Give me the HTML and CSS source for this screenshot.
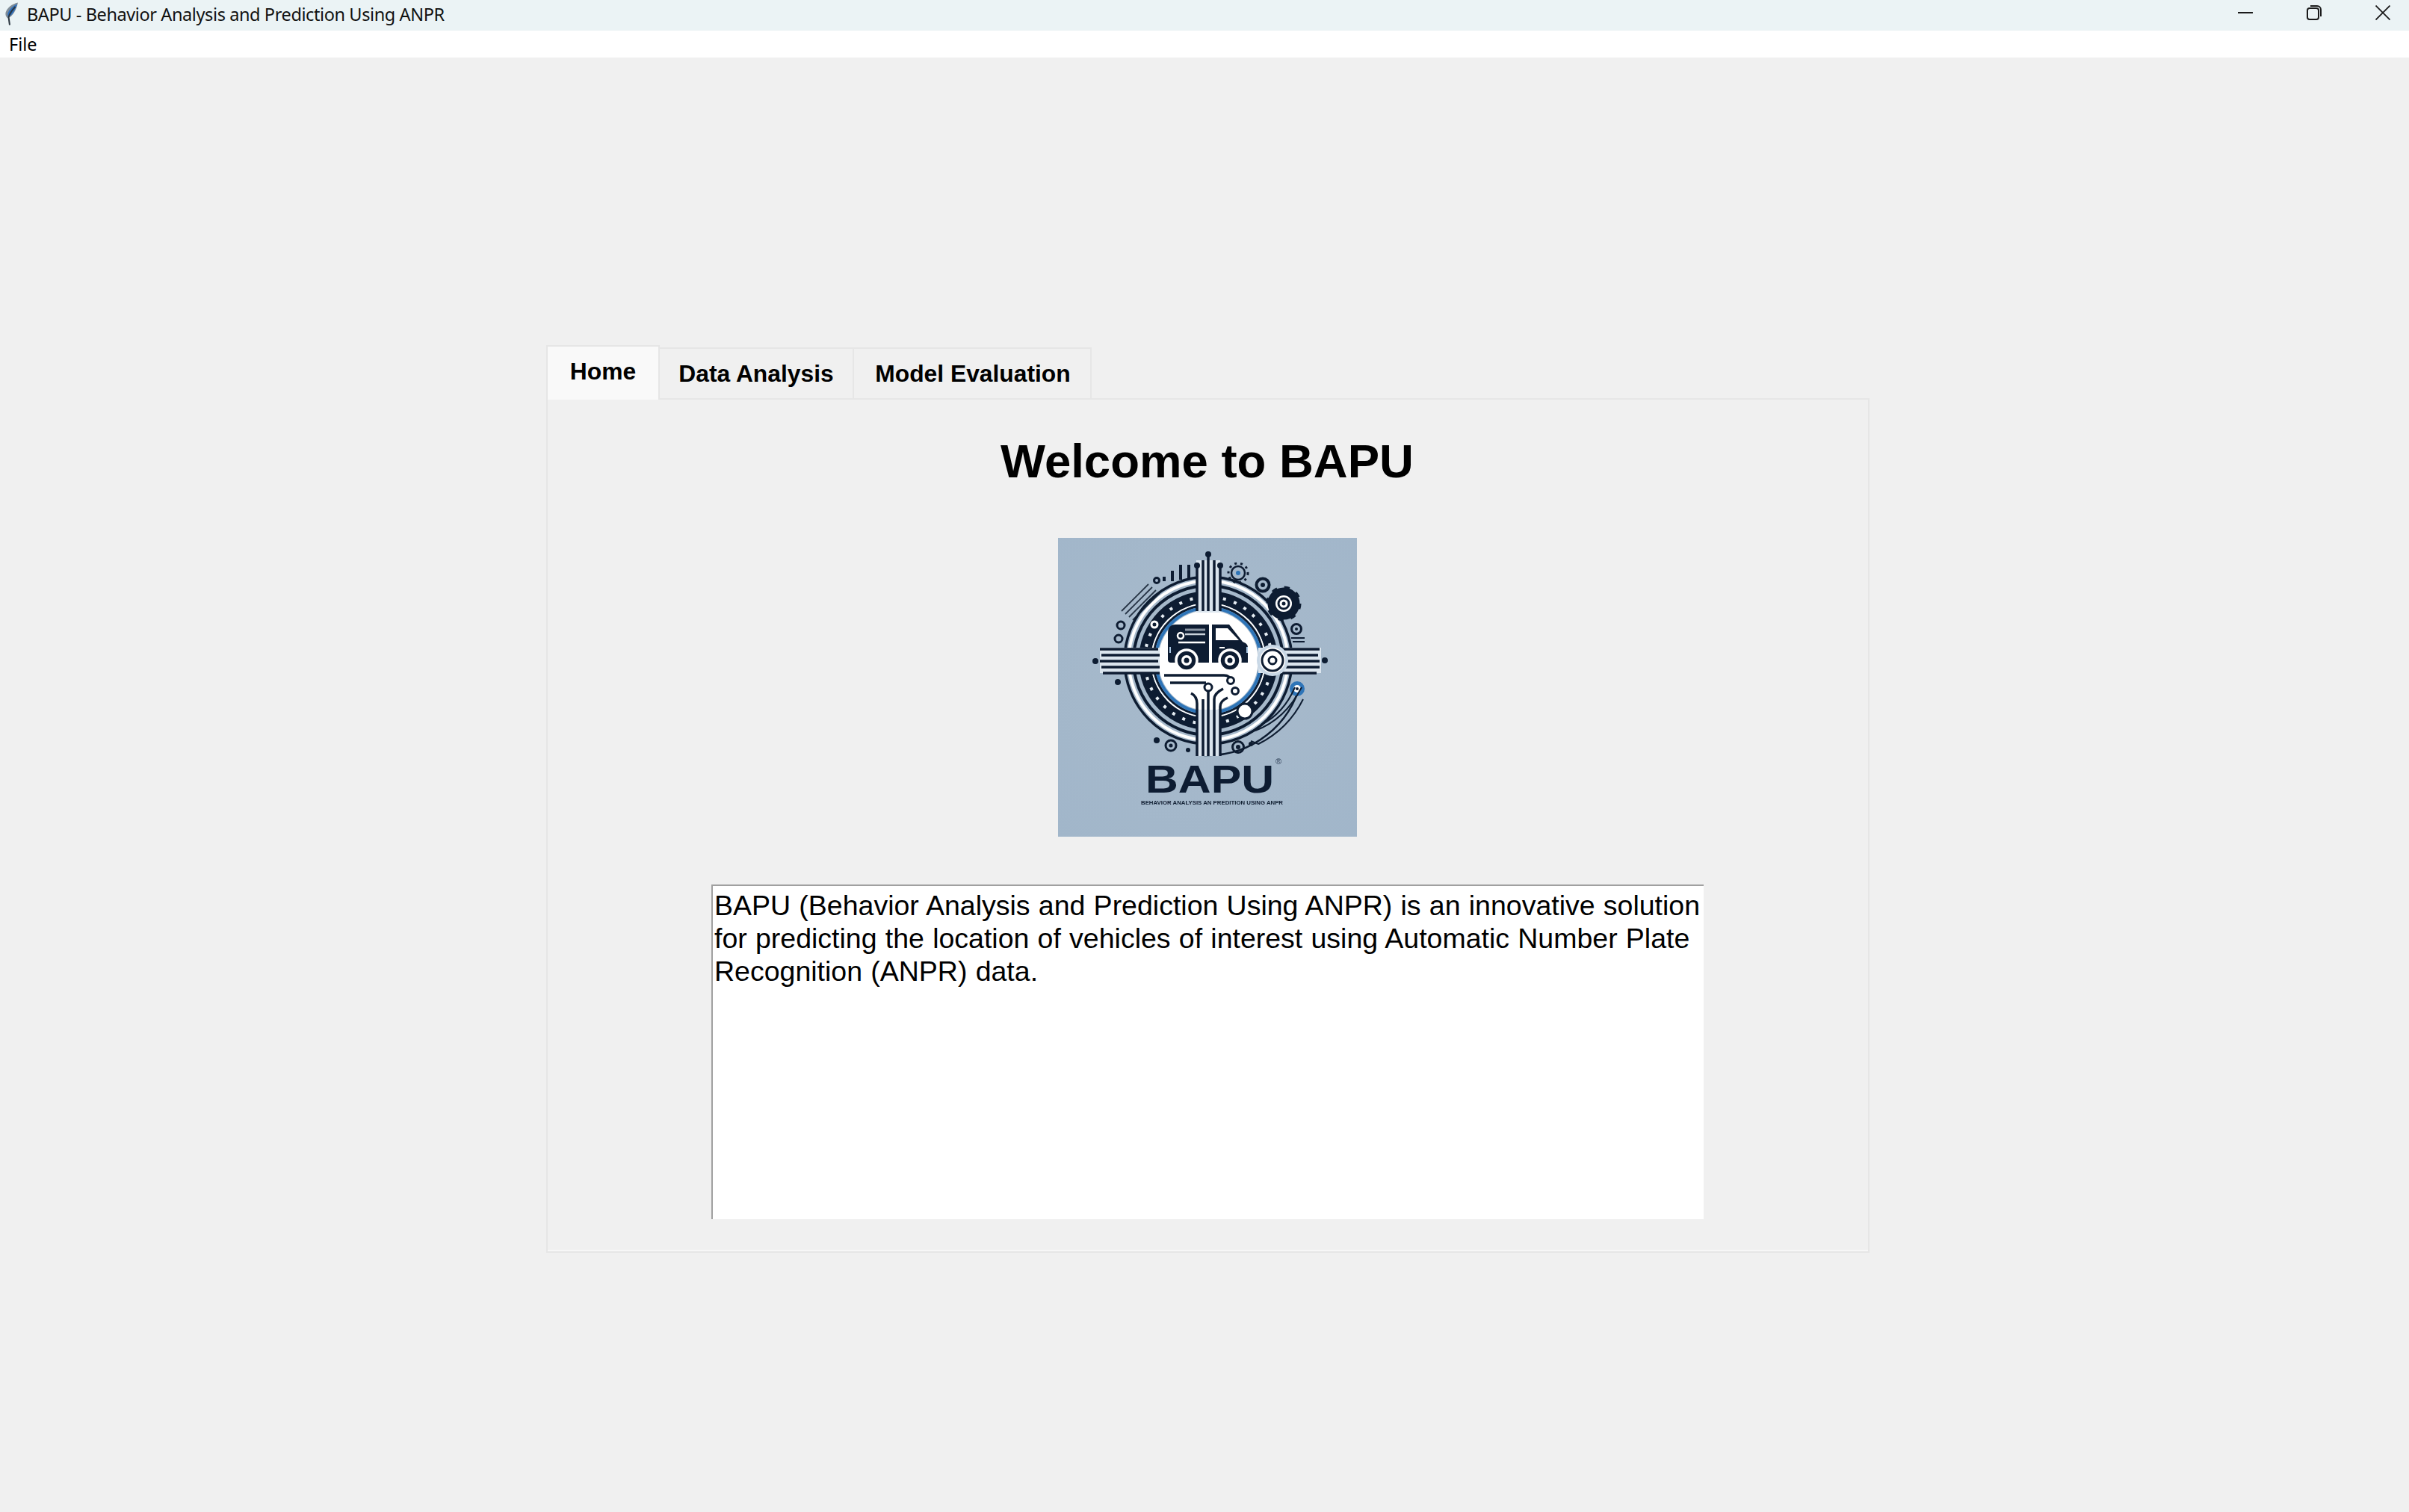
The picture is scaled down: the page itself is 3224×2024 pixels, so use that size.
FILE: index.html
```html
<!DOCTYPE html>
<html lang="en">
<head>
    <meta charset="UTF-8">
    <title>BAPU - Behavior Analysis and Prediction Using ANPR</title>
    <link rel="stylesheet" href="styles.css">
</head>
<body>
    <div class="titlebar">
        <svg class="app-icon" viewBox="0 0 18 32">
            <path d="M18 .5C10 2 3 8 1.500 14c-.5 3 .5 6 3 7.500C11 19 16 10 18 .5z" fill="#7f8c98"/>
            <path d="M17 2.500C11 5 6 10 4.500 15c-.5 2 0 3.500 1 4.500C11 17 15 9 17 2.500z" fill="#2a6fc0"/>
            <path d="M14.500 6C10.500 10 7 15 5.500 20L7 30.500" fill="none" stroke="#2b3640" stroke-width="2"/>
        </svg>
        <span class="window-title">BAPU - Behavior Analysis and Prediction Using ANPR</span>
        <div class="window-controls">
            <svg viewBox="0 0 20 20"><path d="M0 10h20" stroke="#1a1a1a" stroke-width="2"/></svg>
            <svg viewBox="0 0 20 20" fill="none" stroke="#1a1a1a" stroke-width="2">
                <rect x="1" y="4" width="15" height="15" rx="3"/>
                <path d="M5 1h9a5 5 0 0 1 5 5v9"/>
            </svg>
            <svg viewBox="0 0 20 20"><path d="M.5 .5l19 19M19.500 .5l-19 19" stroke="#1a1a1a" stroke-width="1.800"/></svg>
        </div>
    </div>
    <div class="menubar"><span>File</span></div>

    <div class="main">
        <div class="tabs">
            <div class="tab tab-active">Home</div>
            <div class="tab tab-data">Data Analysis</div>
            <div class="tab tab-model">Model Evaluation</div>
        </div>
        <div class="panel">
            <h1>Welcome to BAPU</h1>
            <svg class="logo" viewBox="0 0 400 400">
                <defs>
                    <radialGradient id="bg" cx="50%" cy="45%" r="75%">
                        <stop offset="0" stop-color="#a8bacb"/>
                        <stop offset="1" stop-color="#a1b6ca"/>
                    </radialGradient>
                    <filter id="soft"><feGaussianBlur stdDeviation="0.6"/></filter>
                </defs>
                <rect width="400" height="400" fill="url(#bg)"/>
                <g filter="url(#soft)">
                    <!-- rings -->
                    <g fill="none">
                        <circle cx="201" cy="164" r="127" stroke="#101d30" stroke-width="2.500" stroke-dasharray="175 624" stroke-dashoffset="-30"/>
                        <circle cx="201" cy="164" r="112" stroke="#101d30" stroke-width="3.500"/>
                        <circle cx="201" cy="164" r="106.500" stroke="#fff" stroke-width="4"/>
                        <circle cx="201" cy="164" r="100" stroke="#101d30" stroke-width="4"/>
                        <circle cx="201" cy="164" r="85" stroke="#101d30" stroke-width="16"/>
                        <circle cx="201" cy="164" r="85" stroke="#e4ecf3" stroke-width="4" stroke-dasharray="4 11"/>
                        <circle cx="201" cy="164" r="76" stroke="#fff" stroke-width="2"/>
                        <circle cx="201" cy="164" r="73.500" stroke="#101d30" stroke-width="3"/>
                        <circle cx="201" cy="164" r="70" stroke="#2f74b8" stroke-width="4"/>
                    </g>
                    <circle cx="201" cy="164" r="67" fill="#fff"/>
                    <!-- cross bands cut the rings -->
                    <g fill="#dbe5ee">
                        <rect x="56" y="147" width="80" height="34"/>
                        <rect x="268" y="147" width="84" height="34"/>
                        <rect x="185" y="30" width="32" height="70"/>
                        <rect x="185" y="230" width="32" height="62"/>
                    </g>
                    <g stroke="#101d30" stroke-width="3.500" fill="none">
                        <path d="M56 149h78M58 157h78M56 165h78M58 173h78M60 181h76"/>
                        <path d="M300 149h50M304 157h44M300 165h50M304 173h46M300 181h46"/>
                        <path d="M186 38v60M194 30v68M201 22v76M209 30v68M217 38v60"/>
                        <path d="M186 292v-70q0-10-8-14M194 292v-76M201 292v-92M209 292v-76q0-8 12-14M217 292v-66q0-8 10-12"/>
                        <path d="M142 184h80q8 0 9 7M150 194h48"/>
                    </g>
                    <g fill="#101d30">
                        <circle cx="201" cy="22" r="4"/>
                        <circle cx="186" cy="37" r="4"/>
                        <circle cx="217" cy="37" r="4"/>
                        <circle cx="50" cy="165" r="4"/>
                        <circle cx="357" cy="164" r="4"/>
                        <circle cx="80" cy="193" r="4"/>
                        <circle cx="132" cy="271" r="4"/>
                        <circle cx="174" cy="284" r="3"/>
                        <circle cx="258" cy="276" r="3"/>
                    </g>
                    <!-- car -->
                    <path d="M147 128q0-12 10-12h45v51h-51q-4 0-4-4z" fill="#101d30"/>
                    <path d="M206 116h23l18 23 4 2q3 2 3 6v20h-48z" fill="#101d30"/>
                    <path d="M211 121h16l15 16h-31z" fill="#fff"/>
                    <path d="M216 147h7" stroke="#fff" stroke-width="2"/>
                    <path d="M170 123h27" stroke="#8b97a5" stroke-width="3"/>
                    <path d="M170 129h27" stroke="#c9d2db" stroke-width="2.500"/>
                    <path d="M161 140h36" stroke="#fff" stroke-width="2.500"/>
                    <circle cx="164" cy="131" r="4" fill="#101d30" stroke="#fff" stroke-width="2.500"/>
                    <path d="M149 146h2v8h-2z" fill="#a9c6e2"/>
                    <path d="M252 146h2v8h-2z" fill="#a9c6e2"/>
                    <g fill="#101d30" stroke="#fff" stroke-width="3.500">
                        <circle cx="172" cy="164" r="14"/>
                        <circle cx="230" cy="164" r="14"/>
                    </g>
                    <g fill="#fff">
                        <circle cx="172" cy="164" r="7"/>
                        <circle cx="230" cy="164" r="7"/>
                    </g>
                    <circle cx="172" cy="164" r="3.500" fill="#101d30"/>
                    <circle cx="230" cy="164" r="3.500" fill="#101d30"/>
                    <!-- nodes -->
                    <g fill="#fff" stroke="#101d30" stroke-width="3">
                        <circle cx="231" cy="191" r="4.500"/>
                        <circle cx="201" cy="200" r="5"/>
                        <circle cx="237" cy="205" r="4.500"/>
                        <circle cx="129" cy="116" r="4" stroke="#fff" fill="#101d30"/>
                        <circle cx="287" cy="164" r="19" stroke="#c9d8e6" stroke-width="4"/>
                        <circle cx="287" cy="164" r="14"/>
                        <circle cx="287" cy="164" r="5"/>
                        <circle cx="250" cy="232" r="10"/>
                    </g>
                    <circle cx="250" cy="232" r="4" fill="#fff"/>
                    <!-- small rings and gears -->
                    <g fill="none" stroke="#101d30" stroke-width="3">
                        <circle cx="241" cy="47" r="9" stroke-width="2.500"/>
                        <circle cx="241" cy="47" r="13" stroke-width="3" stroke-dasharray="3 5"/>
                        <circle cx="274" cy="63" r="8.500" stroke-width="4"/>
                        <circle cx="302" cy="88" r="13" stroke-width="5"/>
                        <circle cx="302" cy="88" r="18" stroke-width="7"/>
                        <circle cx="302" cy="88" r="7" stroke-width="3"/>
                        <circle cx="319" cy="122" r="6.500"/>
                        <path d="M312 134h18M314 139h16" stroke-width="2"/>
                        <circle cx="84" cy="117" r="5"/>
                        <circle cx="81" cy="135" r="5"/>
                        <circle cx="132" cy="57" r="3.500"/>
                        <circle cx="151" cy="278" r="7"/>
                        <circle cx="241" cy="280" r="7.500"/>
                    </g>
                    <circle cx="302" cy="88" r="21" fill="none" stroke="#101d30" stroke-width="5" stroke-dasharray="7 9.500"/>
                    <circle cx="302" cy="88" r="11" fill="#fff"/>
                    <circle cx="302" cy="88" r="7" fill="none" stroke="#101d30" stroke-width="3"/>
                    <g fill="#101d30">
                        <circle cx="241" cy="47" r="3" fill="#2f74b8"/>
                        <circle cx="274" cy="63" r="3"/>
                        <circle cx="302" cy="88" r="2.500"/>
                        <circle cx="319" cy="122" r="2"/>
                        <circle cx="151" cy="278" r="2.500"/>
                        <circle cx="241" cy="280" r="3"/>
                    </g>
                    <circle cx="320" cy="202" r="7.500" fill="#fff" stroke="#2f74b8" stroke-width="5"/>
                    <circle cx="320" cy="202" r="2" fill="#101d30"/>
                    <!-- hatch, bars -->
                    <path d="M85 98l36-36M90 102l36-36M95 106l36-36M100 110l36-36" stroke="#101d30" stroke-width="1.800" opacity=".85"/>
                    <path d="M142 58v-6M153 58v-14M164 56v-20M175 54v-18" stroke="#101d30" stroke-width="4"/>
                    <path d="M272 250q30-15 45-50M264 258q40-15 62-58M258 272l10 4q40-20 60-60" fill="none" stroke="#101d30" stroke-width="2"/>
                    <!-- logo wording -->
                    <text class="logo-name" x="117" y="341" textLength="172" lengthAdjust="spacingAndGlyphs">BAPU</text>
                    <text class="logo-mark" x="291" y="303">®</text>
                    <text class="logo-sub" x="111" y="357" textLength="190" lengthAdjust="spacingAndGlyphs">BEHAVIOR ANALYSIS AN PREDITION USING ANPR</text>
                </g>
            </svg>
            <div class="description">BAPU (Behavior Analysis and Prediction Using ANPR) is an innovative solution<br>for predicting the location of vehicles of interest using Automatic Number Plate<br>Recognition (ANPR) data.</div>
        </div>
    </div>
</body>
</html>
```

FILE: styles.css
```css
body {
    margin: 0;
    height: 2024px;
    overflow: hidden;
    background-color: #f0f0f0;
    color: #000;
    font-family: "Liberation Sans", Arial, sans-serif;
}

.titlebar {
    height: 41px;
    display: flex;
    align-items: center;
    background-color: #ebf3f5;
}
.app-icon {
    width: 18px;
    height: 32px;
    margin-left: 6px;
    margin-top: -4px;
}
.window-title {
    margin-left: 12px;
    margin-top: -3px;
    font-family: "Noto Sans", sans-serif;
    font-size: 23.5px;
    letter-spacing: -0.4px;
    color: #111;
}
.window-controls {
    margin-left: auto;
    padding-right: 25px;
    display: flex;
    gap: 72px;
    margin-top: -8px;
}
.window-controls svg {
    width: 20px;
    height: 20px;
}

.menubar {
    height: 36px;
    display: flex;
    align-items: center;
    background: white;
    padding-left: 12px;
    font-family: "Noto Sans", sans-serif;
    font-size: 23.5px;
}

.main {
    padding: 385px 0 0 731px;
}

.tabs {
    display: flex;
    align-items: flex-end;
    height: 73px;
    margin-bottom: -2px;
    position: relative;
}
.tab {
    height: 70px;
    box-sizing: border-box;
    border: 2px solid #e6e6e6;
    border-left: none;
    display: flex;
    justify-content: center;
    align-items: center;
    font-size: 31.8px;
    font-weight: bold;
}
.tab-active {
    width: 152px;
    height: 73px;
    border-left: 2px solid #e6e6e6;
    border-bottom: none;
    padding-bottom: 5px;
    background-color: #f9f9f9;
}
.tab-data {
    width: 260px;
}
.tab-model {
    width: 318px;
    padding-left: 2px;
}

.panel {
    width: 1771px;
    height: 1144px;
    box-sizing: border-box;
    border: 2px solid #e6e6e6;
    box-shadow: inset 0 -2px #f7f7f7;
    display: flex;
    flex-direction: column;
    align-items: center;
}
.panel h1 {
    margin: 44px 2px 0 0;
    height: 77px;
    line-height: 77px;
    font-size: 63.5px;
    font-weight: bold;
}
.logo {
    display: block;
    width: 400px;
    height: 400px;
    margin: 64px 1px 0 0;
}
.logo-name {
    font-family: "Liberation Sans", Arial, sans-serif;
    font-size: 52px;
    font-weight: bold;
    fill: #101d30;
}
.logo-mark {
    font-family: "Liberation Sans", Arial, sans-serif;
    font-size: 11px;
    fill: #2a3b52;
}
.logo-sub {
    font-family: "Liberation Sans", Arial, sans-serif;
    font-size: 8px;
    font-weight: bold;
    fill: #101d30;
}
.description {
    width: 1328px;
    height: 448px;
    margin: 64px 1px 0 0;
    box-sizing: border-box;
    background: white;
    border-top: 2px solid #a0a0a0;
    border-left: 2px solid #a0a0a0;
    padding: 5px 0 0 2px;
    white-space: nowrap;
    font-size: 37.5px;
    word-spacing: 0.8px;
    line-height: 43.8px;
}
```
